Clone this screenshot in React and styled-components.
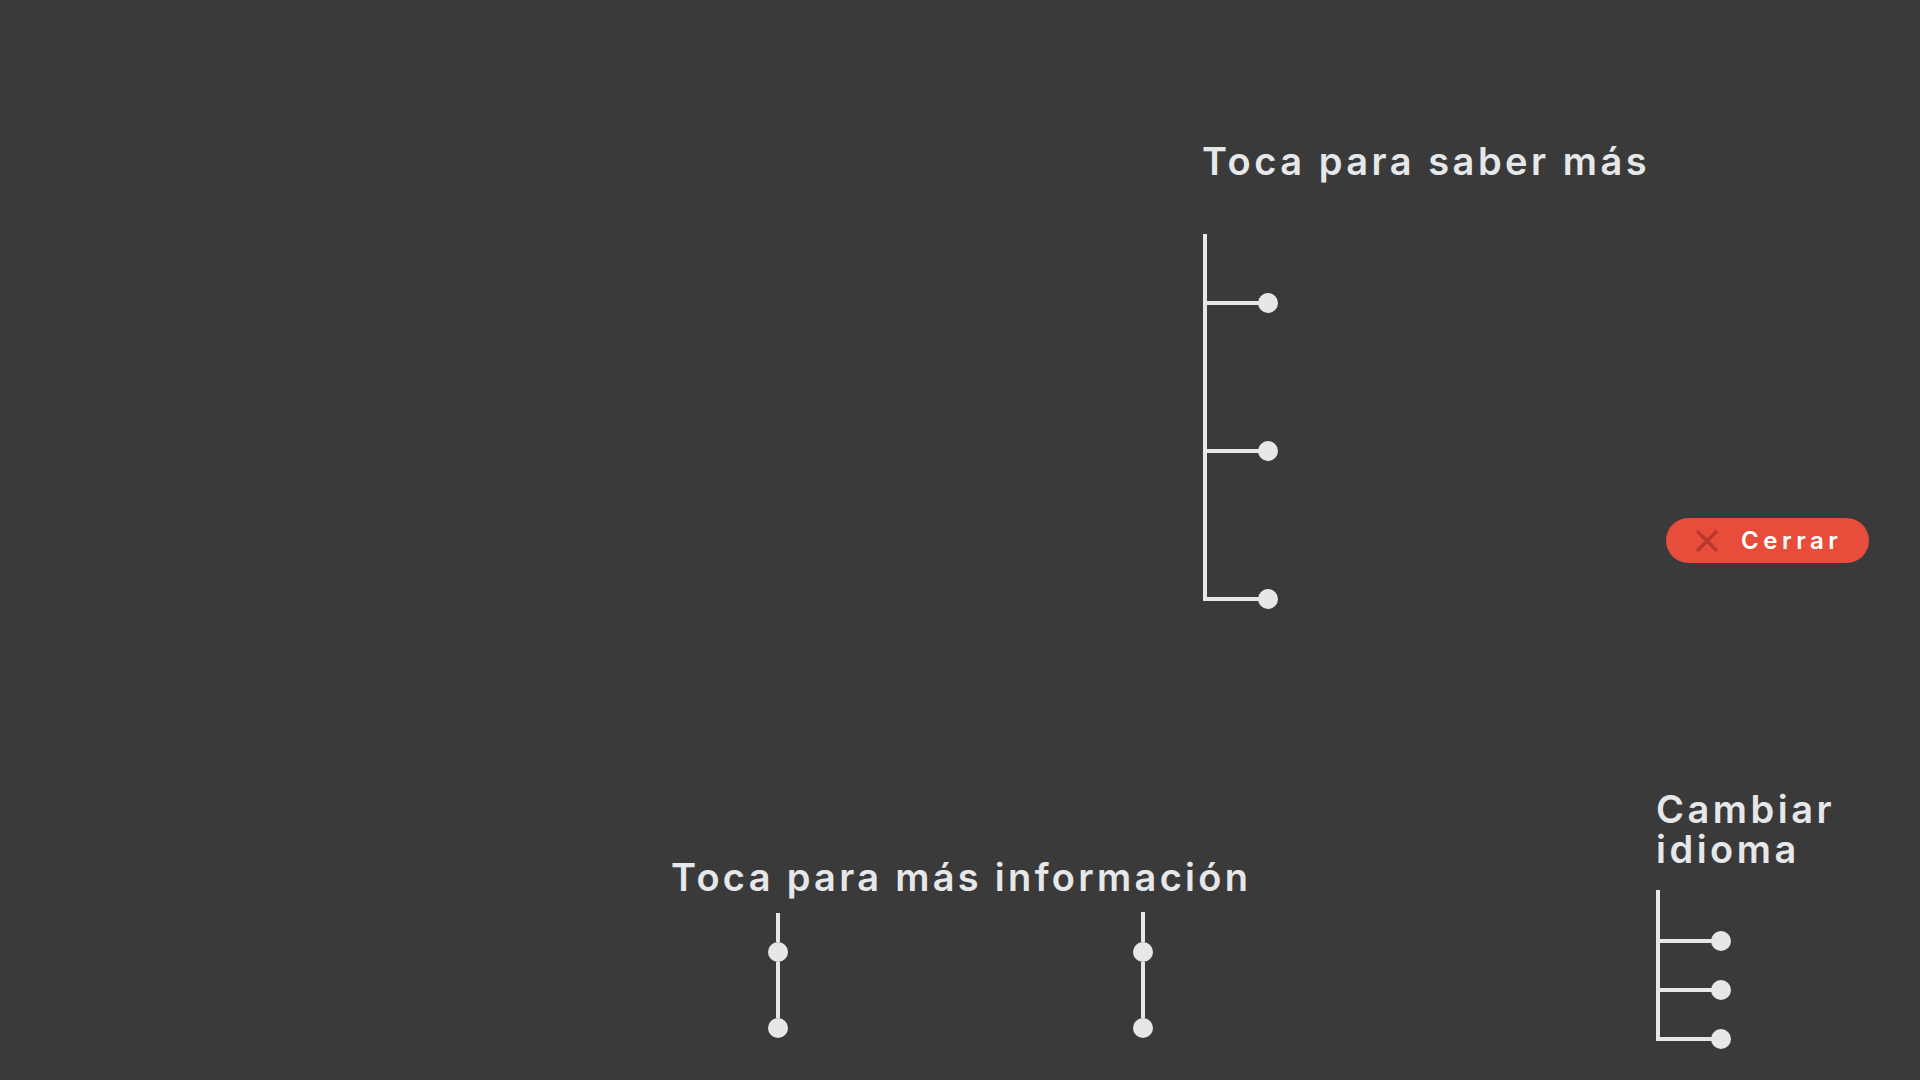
import React from 'react'
import styled, { createGlobalStyle } from 'styled-components'

const GlobalStyle = createGlobalStyle`
  html, body {
    margin: 0;
    padding: 0;
    background: #3a3a3a;
  }

  body {
    font-family: Inter, 'Noto Sans', sans-serif;
    color: #e6e7e9;
  }
`

const Screen = styled.div`
  position: relative;
  width: 1920px;
  height: 1080px;
  overflow: hidden;
  background: #3a3a3a;
`

// coach marks sit over the kiosk screen, so they are placed absolutely
const Hint = styled.div`
  position: absolute;
  left: ${(p) => p.x}px;
  top: ${(p) => p.y}px;
  display: flex;
  flex-direction: column;
  gap: ${(p) => p.gap || 0}px;
`

const HintTitle = styled.h2`
  margin: 0 0 0 ${(p) => p.inset || 0}px;
  font-size: 38px;
  line-height: 40px;
  font-weight: 600;
  letter-spacing: ${(p) => p.track || 3.5}px;
  white-space: nowrap;
  color: #e6e7e9;
`

const Tree = styled.div`
  display: flex;
  flex-direction: column;
  gap: ${(p) => p.gap}px;
  padding-top: ${(p) => p.lead}px;
  border-left: 4px solid #e6e7e9;
  width: 80px;
`

const Branch = styled.div`
  position: relative;
  width: 61px;
  height: 4px;
  background: #e6e7e9;

  &::after {
    content: '';
    position: absolute;
    right: -10px;
    top: -8px;
    width: 20px;
    height: 20px;
    border-radius: 50%;
    background: #e6e7e9;
  }
`

const SliderRow = styled.div`
  display: flex;
  gap: ${(p) => p.gap}px;
  padding-left: ${(p) => p.indent}px;
`

const Slider = styled.div`
  display: flex;
  flex-direction: column;
  align-items: center;
  width: 20px;
  margin-top: ${(p) => p.shift || 0}px;
`

const Track = styled.div`
  width: 4px;
  height: ${(p) => p.len}px;
  background: #e6e7e9;
`

const Knob = styled.div`
  width: 20px;
  height: 20px;
  border-radius: 50%;
  background: #e6e7e9;
`

const CloseButton = styled.button`
  position: absolute;
  left: 1666px;
  top: 518px;
  width: 203px;
  height: 45px;
  display: flex;
  align-items: center;
  gap: 22px;
  padding: 0 0 0 29px;
  border: none;
  border-radius: 23px;
  background: #e84d3b;
  color: #ffffff;
  font-family: Inter, 'Noto Sans', sans-serif;
  font-size: 24px;
  font-weight: 600;
  letter-spacing: 4.5px;
  cursor: pointer;
`

const CloseIcon = () => (
  <svg width="24" height="24" viewBox="0 0 24 24">
    <path d="M2 2 L22 22 M22 2 L2 22" stroke="#b8382d" strokeWidth="3.4" fill="none" />
  </svg>
)

const App = () => {
  return (
    <>
      <GlobalStyle />
      <Screen>
        <Hint x={1203} y={141} gap={53}>
          <HintTitle inset={-1}>Toca para saber más</HintTitle>
          <Tree lead={67} gap={144}>
            <Branch />
            <Branch />
            <Branch />
          </Tree>
        </Hint>

        <CloseButton>
          <CloseIcon />
          Cerrar
        </CloseButton>

        <Hint x={671} y={857} gap={16}>
          <HintTitle track={3.3}>Toca para más información</HintTitle>
          <SliderRow indent={97} gap={345}>
            <Slider>
              <Track len={29} />
              <Knob />
              <Track len={56} />
              <Knob />
            </Slider>
            <Slider shift={-1}>
              <Track len={30} />
              <Knob />
              <Track len={56} />
              <Knob />
            </Slider>
          </SliderRow>
        </Hint>

        <Hint x={1656} y={789} gap={21}>
          <HintTitle>
            Cambiar
            <br />
            idioma
          </HintTitle>
          <Tree lead={49} gap={45}>
            <Branch />
            <Branch />
            <Branch />
          </Tree>
        </Hint>
      </Screen>
    </>
  )
}

export default App
